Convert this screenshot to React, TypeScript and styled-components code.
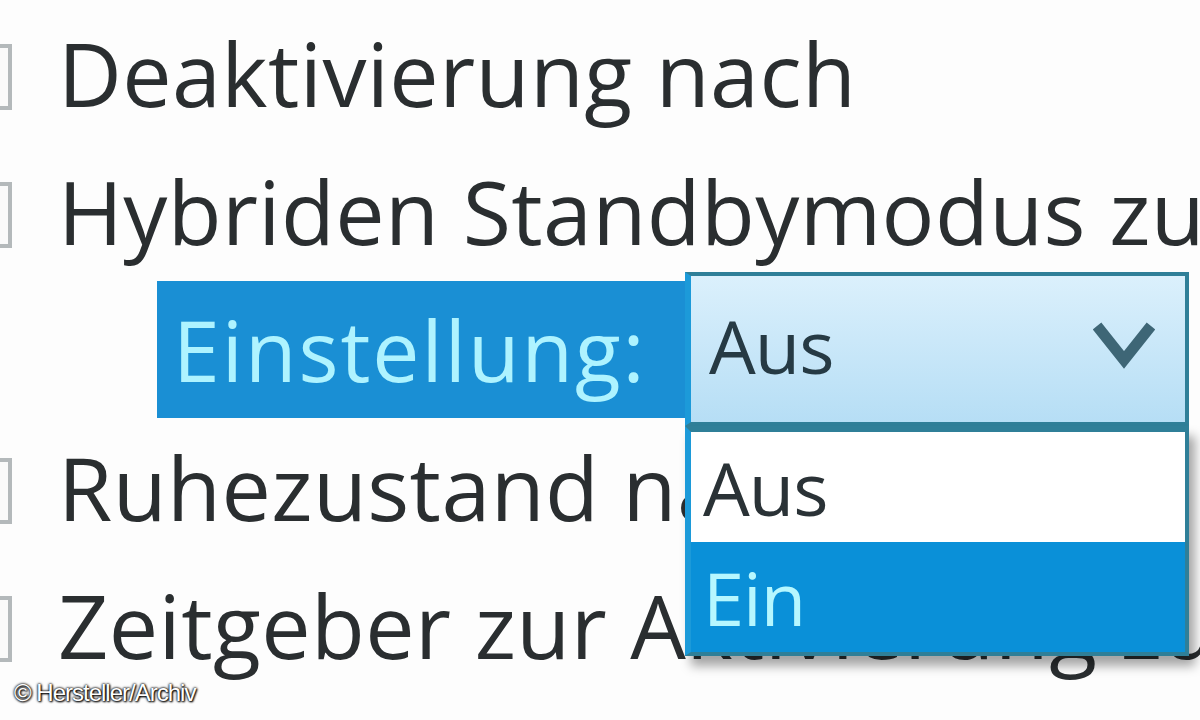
import React from 'react'
import styled, { createGlobalStyle } from 'styled-components'

const GlobalStyle = createGlobalStyle`
  html, body {
    margin: 0;
    padding: 0;
    background: #fdfdfd;
  }
`

const Page = styled.div`
  position: relative;
  width: 1200px;
  height: 720px;
  overflow: hidden;
  background: #fdfdfd;
  font-family: "Open Sans", "Noto Sans", sans-serif;
  color: #2a2e30;
`

const List = styled.div`
  display: flex;
  flex-direction: column;
  padding-top: 4px;
`

const Row = styled.div`
  display: flex;
  align-items: center;
  height: 138px;
  white-space: nowrap;
`

const Expander = styled.span`
  flex: none;
  box-sizing: border-box;
  width: 66px;
  height: 66px;
  margin-top: 8px;
  margin-left: -54px;
  margin-right: 46px;
  border: 4px solid #b4b9bb;
  background: #fafafa;
`

const Label = styled.span`
  font-size: 88px;
  letter-spacing: 0.4px;
  line-height: 1;
`

const SettingRow = styled.div`
  display: flex;
  align-items: center;
  height: 138px;
  padding-left: 157px;
  white-space: nowrap;
`

const Highlight = styled.div`
  display: flex;
  align-items: center;
  height: 137px;
  width: 528px;
  padding-left: 16px;
  box-sizing: border-box;
  background: #1a8fd4;
  color: #aef3ff;
  font-size: 84px;
  letter-spacing: 2px;
`

const ComboWrap = styled.div`
  position: relative;
  flex: none;
`

const Combo = styled.div`
  display: flex;
  align-items: center;
  justify-content: space-between;
  box-sizing: border-box;
  width: 504px;
  height: 154px;
  padding: 0 30px 8px 18px;
  border: 4px solid #2f7f98;
  border-left: 6px solid #1c9ad9;
  background: linear-gradient(#dbf0fc, #b6def5);
  color: #263a44;
  font-size: 74px;
  letter-spacing: -1px;
`

const Dropdown = styled.div`
  position: absolute;
  left: 0;
  top: 154px;
  width: 504px;
  box-sizing: border-box;
  border: 4px solid #2f7f98;
  border-top: 6px solid #2f7f98;
  border-left: 6px solid #1c9ad9;
  background: #fff;
  box-shadow: 6px 10px 10px rgba(0, 0, 0, 0.35);
`

const Option = styled.div<{ $selected?: boolean }>`
  display: flex;
  align-items: center;
  height: 110px;
  padding-left: 12px;
  background: ${(p) => (p.$selected ? '#0a90d8' : '#ffffff')};
  color: ${(p) => (p.$selected ? '#b6f7ff' : '#2a3236')};
  font-size: 74px;
  letter-spacing: -1px;
`

const Credit = styled.div`
  position: absolute;
  left: 14px;
  bottom: 13px;
  font-family: "Liberation Sans", Arial, sans-serif;
  font-size: 24px;
  letter-spacing: -1px;
  color: #ffffff;
  text-shadow: 0 0 2px #000, 0 0 3px #000, 1px 1px 2px #000;
`

const Chevron = () => (
  <svg width="62" height="50" viewBox="0 0 62 50">
    <path d="M4 6 L31 40 L58 6" fill="none" stroke="#3e6676" strokeWidth="11" />
  </svg>
)

const rows = [
  'Deaktivierung nach',
  'Hybriden Standbymodus zulassen',
]

const after = [
  'Ruhezustand nach',
  'Zeitgeber zur Aktivierung zulassen',
]

export default function App() {
  return (
    <Page>
      <GlobalStyle />
      <List>
        {rows.map((r) => (
          <Row key={r}>
            <Expander />
            <Label>{r}</Label>
          </Row>
        ))}
        <SettingRow>
          <Highlight>Einstellung:</Highlight>
          <ComboWrap>
            <Combo>
              <span>Aus</span>
              <Chevron />
            </Combo>
            <Dropdown>
              <Option>Aus</Option>
              <Option $selected>Ein</Option>
            </Dropdown>
          </ComboWrap>
        </SettingRow>
        {after.map((r) => (
          <Row key={r}>
            <Expander />
            <Label>{r}</Label>
          </Row>
        ))}
      </List>
      <Credit>© Hersteller/Archiv</Credit>
    </Page>
  )
}
